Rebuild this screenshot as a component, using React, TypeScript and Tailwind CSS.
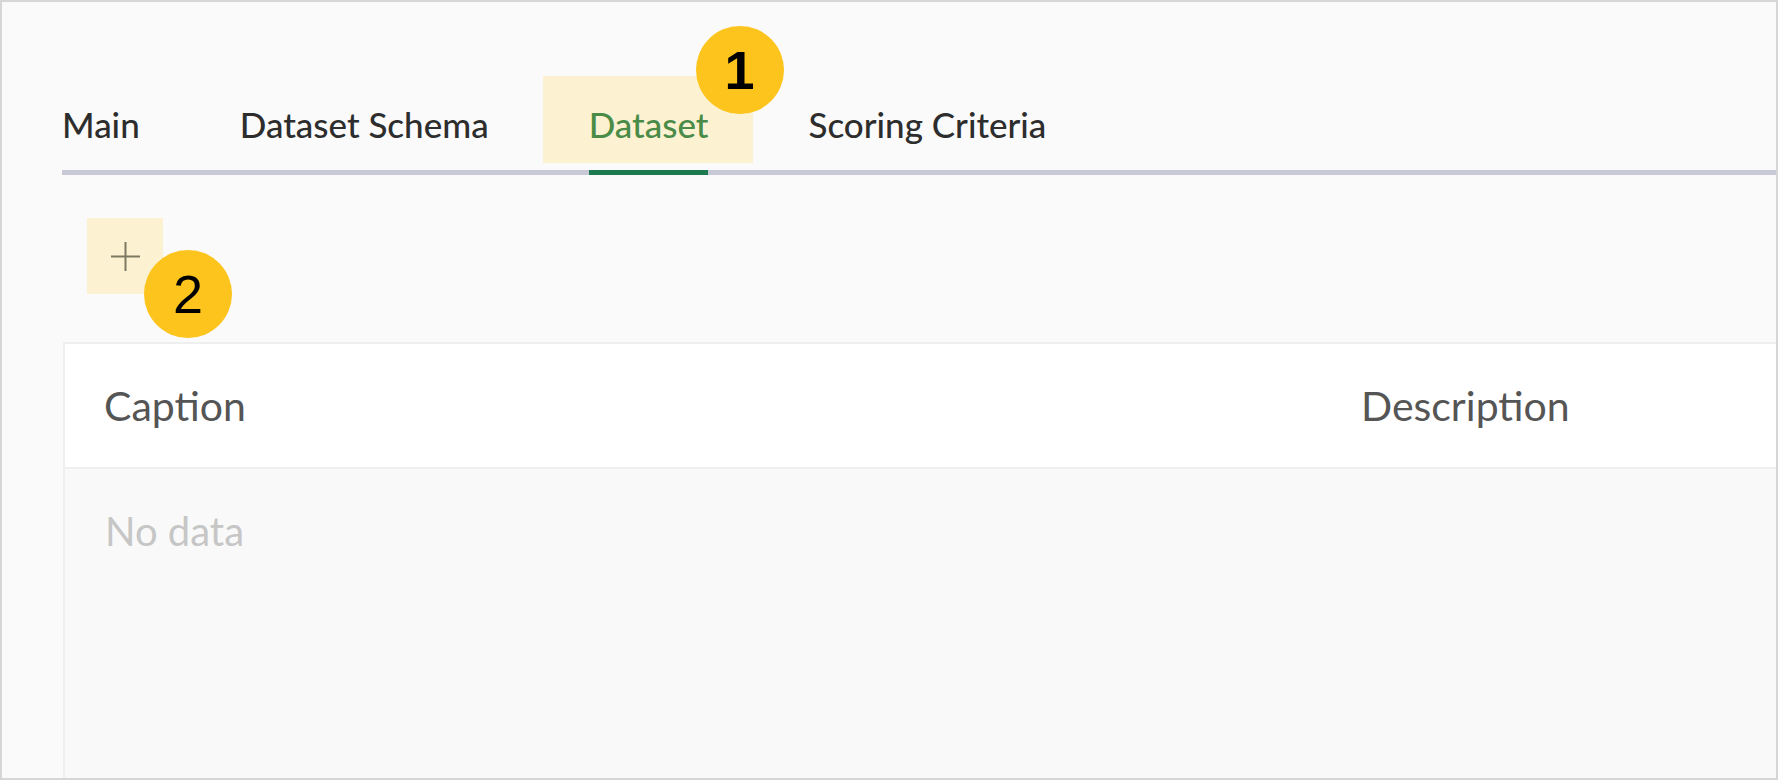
const tabs = ["Main", "Dataset Schema", "Dataset", "Scoring Criteria"];

function Badge({ n, className }: { n: number; className: string }) {
  return (
    <span
      className={`absolute flex h-[88px] w-[88px] items-center justify-center rounded-full bg-[#fcc41c] text-[54px] leading-none text-black ${className}`}
      style={{ fontFamily: '"Liberation Sans", Arial, sans-serif' }}
    >
      {n}
    </span>
  );
}

export default function App() {
  return (
    <div
      className="h-[780px] w-[1778px] overflow-hidden border-2 border-[#d6d6d6] bg-[#fafafa]"
      style={{ fontFamily: 'Lato, "Open Sans", sans-serif' }}
    >
      <div className="pl-[60px]">
        {/* tab strip */}
        <div className="flex gap-[100px] border-b-[5px] border-[#c7cad6] pt-[101px]">
          {tabs.map((t) => {
            const active = t === "Dataset";
            return (
              <div
                key={t}
                className={`relative -mb-[5px] border-b-[5px] pb-[25px] text-[35px] font-medium leading-[42px] ${
                  active ? "border-[#1d7a50] text-[#4a8b47]" : "border-transparent text-[#2d2d2d]"
                }`}
              >
                {active && (
                  <>
                    <span className="absolute -top-[27px] -left-[46px] -right-[45px] bottom-[7px] bg-[#fcf2d2]" />
                    <Badge n={1} className="-top-[77px] left-[107px] font-bold" />
                  </>
                )}
                <span className="relative">{t}</span>
              </div>
            );
          })}
        </div>

        {/* add button */}
        <div className="relative mt-[43px] ml-[25px] h-[76px] w-[76px]">
          <button className="flex h-full w-full items-center justify-center bg-[#fcf2d2] text-[#7d7862]">
            <svg width="31" height="31" viewBox="0 0 31 31" fill="none" stroke="currentColor" strokeWidth="2">
              <path d="M15.5 1v29M1 15.5h29" />
            </svg>
          </button>
          <Badge n={2} className="top-[32px] left-[57px]" />
        </div>

        {/* table */}
        <div className="mt-[48px] ml-[1px] border-t-2 border-l-2 border-[#efefef]">
          <div className="flex h-[125px] items-center border-b-2 border-[#efefef] bg-white text-[41px] leading-none text-[#555]">
            <div className="w-[1255px] pl-[39px]">Caption</div>
            <div className="pl-[41px]">Description</div>
          </div>
          <div className="h-[400px] bg-[#f9f9f9] pl-[40px] pt-[38px] text-[40px] leading-[49px] text-[#c6c6c6]">
            No data
          </div>
        </div>
      </div>
    </div>
  );
}
